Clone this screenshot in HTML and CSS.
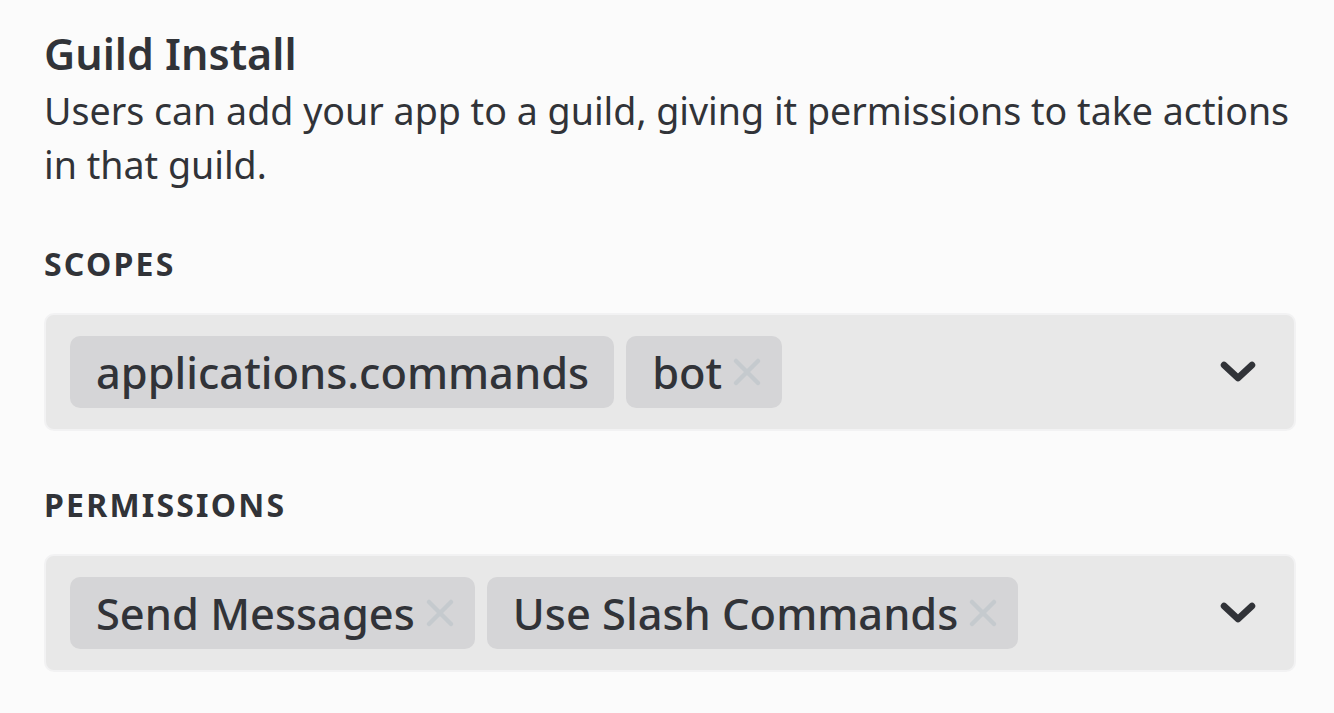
FILE: index.html
```html
<!DOCTYPE html>
<html lang="en">
<head>
<meta charset="utf-8">
<title>Guild Install</title>
<link rel="stylesheet" href="styles.css">
</head>
<body>
<main class="section">
  <h2 class="title">Guild Install</h2>
  <p class="desc">Users can add your app to a guild, giving it permissions to take actions in that guild.</p>

  <div class="field">
    <div class="label">SCOPES</div>
    <div class="select">
      <div class="tags">
        <span class="tag">applications.commands</span>
        <span class="tag removable">bot<svg class="x" viewBox="0 0 30 30"><path d="M4 4L26 26M26 4L4 26"/></svg></span>
      </div>
      <svg class="chev" viewBox="0 0 36 22"><path d="M4 4L18 17L32 4"/></svg>
    </div>
  </div>

  <div class="field">
    <div class="label">PERMISSIONS</div>
    <div class="select">
      <div class="tags">
        <span class="tag removable">Send Messages<svg class="x" viewBox="0 0 30 30"><path d="M4 4L26 26M26 4L4 26"/></svg></span>
        <span class="tag removable">Use Slash Commands<svg class="x" viewBox="0 0 30 30"><path d="M4 4L26 26M26 4L4 26"/></svg></span>
      </div>
      <svg class="chev" viewBox="0 0 36 22"><path d="M4 4L18 17L32 4"/></svg>
    </div>
  </div>
</main>
</body>
</html>
```

FILE: styles.css
```css
html, body {
  margin: 0;
  padding: 0;
  background: #fbfbfb;
}
body {
  font-family: "Noto Sans", "Open Sans", sans-serif;
  color: #313338;
}
.section {
  width: 1252px;
  padding: 26px 0 0 44px;
}
.title {
  margin: 0;
  font-size: 43px;
  font-weight: 600;
  line-height: 56px;
}
.desc {
  margin: 2px 0 0;
  font-size: 37.6px;
  line-height: 54px;
  font-weight: 400;
}
.field {
  margin-top: 52px;
}
.field + .field {
  margin-top: 54px;
}
.label {
  font-size: 32px;
  font-weight: 700;
  line-height: 40px;
  letter-spacing: 2.2px;
}
.select {
  margin-top: 29px;
  box-sizing: border-box;
  height: 118px;
  background: #e8e8e8;
  border: 2px solid #f2f2f3;
  border-radius: 10px;
  padding: 21px 38px 21px 24px;
  display: flex;
  align-items: center;
  justify-content: space-between;
}
.tags {
  display: flex;
  gap: 12px;
}
.tag {
  height: 72px;
  box-sizing: border-box;
  display: inline-flex;
  align-items: center;
  padding: 0 25px 0 26px;
  background: #d5d5d7;
  border-radius: 10px;
  font-size: 43.4px;
  font-weight: 500;
  white-space: nowrap;
}
.tag.removable {
  padding-right: 20px;
}
.x {
  width: 30px;
  height: 30px;
  margin-left: 10px;
  fill: none;
  stroke: #c5cace;
  stroke-width: 4.5;
  stroke-linecap: round;
}
.chev {
  width: 36px;
  height: 22px;
  fill: none;
  stroke: #313338;
  stroke-width: 6.5;
  stroke-linecap: round;
  stroke-linejoin: round;
}
```
